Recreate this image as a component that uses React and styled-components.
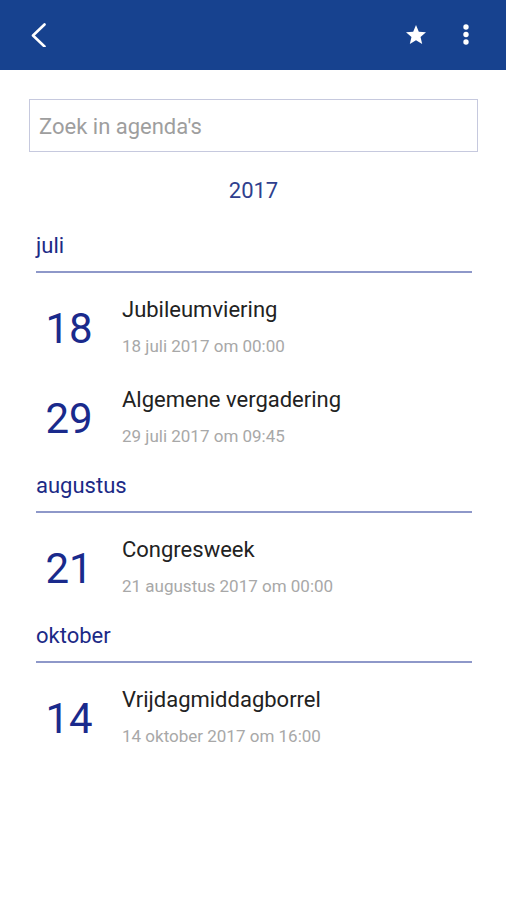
import React from "react";
import styled, { createGlobalStyle } from "styled-components";

const Global = createGlobalStyle`
  html, body { margin: 0; padding: 0; background: #ffffff; }
  body { font-family: Roboto, "Noto Sans", "Liberation Sans", sans-serif; }
  * { box-sizing: border-box; }
`;

const Page = styled.div`
  width: 506px;
  min-height: 900px;
  background: #ffffff;
`;

const AppBar = styled.header`
  height: 70px;
  background: #17428f;
  display: flex;
  align-items: center;
  padding: 0 35px 0 27px;
`;

const IconButton = styled.button`
  border: 0;
  background: transparent;
  padding: 0;
  margin: 0;
  width: ${(p) => p.$w || 24}px;
  height: 24px;
  display: flex;
  align-items: center;
  justify-content: center;
  color: #ffffff;
  cursor: pointer;
`;

const Spacer = styled.div`
  flex: 1;
`;

const Actions = styled.div`
  display: flex;
  align-items: center;
  gap: 33px;
`;

const Content = styled.main`
  padding: 29px 28px 0 29px;
`;

const SearchInput = styled.input`
  display: block;
  width: 449px;
  height: 53px;
  border: 1.5px solid #c6c9de;
  border-radius: 0;
  padding: 2px 0 0 9px;
  font-family: Roboto, "Noto Sans", sans-serif;
  font-size: 22px;
  color: #333;
  outline: none;
  background: #fff;
  &::placeholder {
    color: #9e9e9e;
  }
`;

const Year = styled.div`
  margin-top: 25.5px;
  text-align: center;
  font-size: 22px;
  line-height: 26px;
  color: #2f3f8e;
`;

const List = styled.div`
  padding: 0 6px 0 7px;
  margin-top: 9.5px;
`;

const MonthHeader = styled.div`
  height: 60px;
  padding: 20px 0 13px 0;
  font-size: 22px;
  line-height: 25px;
  color: #1c2a86;
  border-bottom: 2px solid #8e98c9;
`;

const Row = styled.div`
  height: 90px;
  display: flex;
  align-items: flex-start;
  padding-top: 24px;
`;

const Day = styled.div`
  width: 66px;
  flex: none;
  margin-top: 8px;
  text-align: center;
  font-size: 42px;
  line-height: 48px;
  color: #1a2a8c;
`;

const Info = styled.div`
  margin-left: 20px;
  display: flex;
  flex-direction: column;
`;

const Title = styled.div`
  font-size: 22px;
  line-height: 26px;
  color: #222222;
`;

const When = styled.div`
  margin-top: 13.4px;
  font-size: 17px;
  line-height: 20px;
  color: #a8a8a8;
`;

const data = [
  {
    month: "juli",
    events: [
      { day: 18, title: "Jubileumviering", when: "18 juli 2017 om 00:00" },
      { day: 29, title: "Algemene vergadering", when: "29 juli 2017 om 09:45" },
    ],
  },
  {
    month: "augustus",
    events: [
      { day: 21, title: "Congresweek", when: "21 augustus 2017 om 00:00" },
    ],
  },
  {
    month: "oktober",
    events: [
      { day: 14, title: "Vrijdagmiddagborrel", when: "14 oktober 2017 om 16:00" },
    ],
  },
];

export default function App() {
  return (
    <Page>
      <Global />
      <AppBar>
        <IconButton $w={24} aria-label="Terug">
          <svg width="24" height="24" viewBox="0 0 24 24">
            <path
              d="M17.5 1.5 L6 12.5 L17.5 23.5"
              fill="none"
              stroke="#fff"
              strokeWidth="2.6"
              strokeLinecap="round"
              strokeLinejoin="round"
            />
          </svg>
        </IconButton>
        <Spacer />
        <Actions>
          <IconButton $w={24} aria-label="Favoriet">
            <svg width="24" height="24" viewBox="0 0 24 24">
              <path
                fill="#fff"
                d="M12 17.27L18.18 21l-1.64-7.03L22 9.24l-7.19-.61L12 2 9.19 8.63 2 9.24l5.46 4.73L5.82 21z"
              />
            </svg>
          </IconButton>
          <IconButton $w={10} aria-label="Meer">
            <svg width="10" height="24" viewBox="0 0 10 24">
              <circle cx="5" cy="4" r="2.7" fill="#fff" />
              <circle cx="5" cy="11.5" r="2.7" fill="#fff" />
              <circle cx="5" cy="19" r="2.7" fill="#fff" />
            </svg>
          </IconButton>
        </Actions>
      </AppBar>
      <Content>
        <SearchInput placeholder="Zoek in agenda's" />
        <Year>2017</Year>
        <List>
          {data.map((m) => (
            <section key={m.month}>
              <MonthHeader>{m.month}</MonthHeader>
              {m.events.map((e) => (
                <Row key={e.title}>
                  <Day>{e.day}</Day>
                  <Info>
                    <Title>{e.title}</Title>
                    <When>{e.when}</When>
                  </Info>
                </Row>
              ))}
            </section>
          ))}
        </List>
      </Content>
    </Page>
  );
}
